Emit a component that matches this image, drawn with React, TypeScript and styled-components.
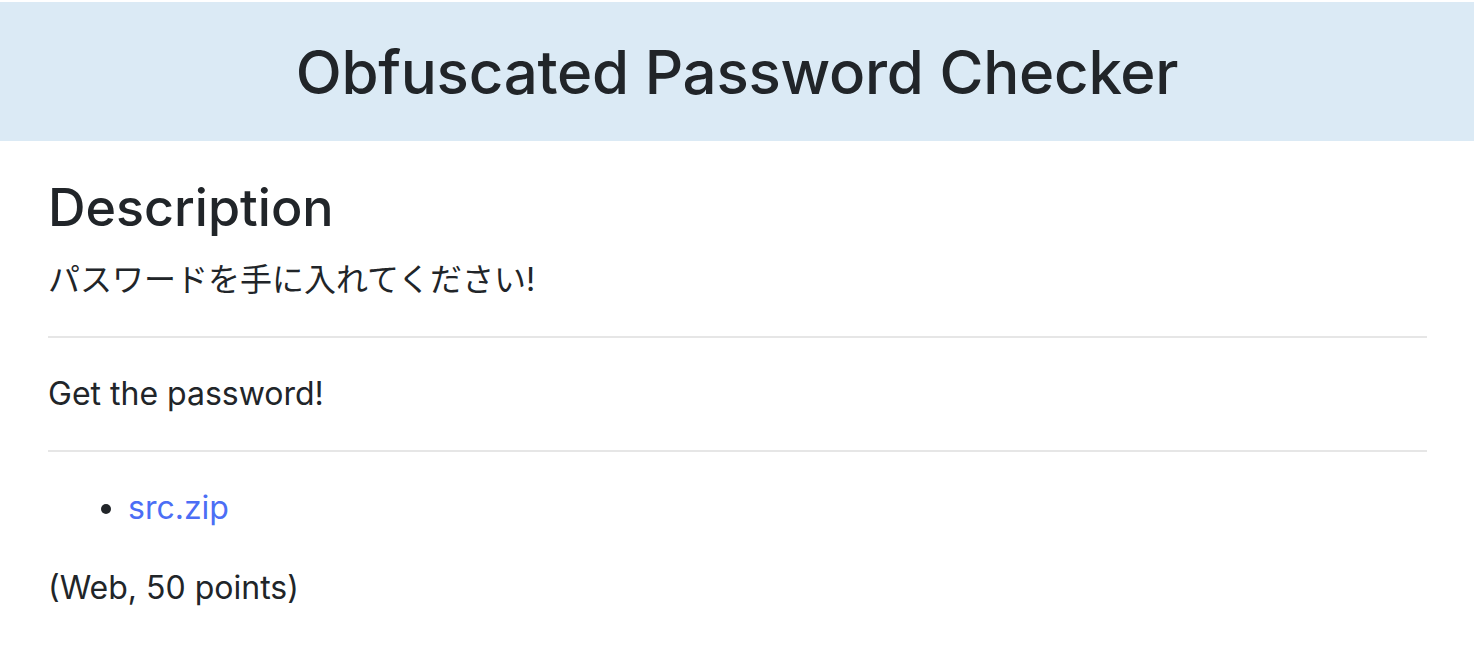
import React from "react";
import styled, { createGlobalStyle } from "styled-components";

const Global = createGlobalStyle`
  html, body { margin: 0; padding: 0; background: #fff; }
  body {
    font-family: Inter, "Noto Sans CJK JP", sans-serif;
    font-size: 32px;
    line-height: 1.5;
    color: #212529;
  }
  * { box-sizing: border-box; }
`;

const Header = styled.header`
  margin-top: 2px;
  height: 139px;
  background: #dbeaf5;
  display: flex;
  align-items: center;
  justify-content: center;
`;

const Title = styled.h1`
  margin: 0;
  font-size: 60px;
  font-weight: 500;
  line-height: 1.2;
  letter-spacing: -0.25px;
`;

const Main = styled.main`
  padding: 35px 47px 0 48px;
`;

const Heading = styled.h2`
  margin: 0 0 16px;
  font-size: 52px;
  font-weight: 500;
  line-height: 1.24;
`;

const Para = styled.p`
  margin: 0 0 32px;
  font-family: Inter, "Noto Sans CJK JP", sans-serif;
`;

const Rule = styled.hr`
  margin: 32px 0;
  border: 0;
  border-top: 2px solid #e6e6e6;
`;

const List = styled.ul`
  margin: 0 0 32px;
  padding-left: 80px;
`;

const Link = styled.a`
  color: #4c6ef5;
  text-decoration: none;
`;

export default function App() {
  return (
    <>
      <Global />
      <Header>
        <Title>Obfuscated Password Checker</Title>
      </Header>
      <Main>
        <Heading>Description</Heading>
        <Para>パスワードを手に入れてください!</Para>
        <Rule />
        <Para>Get the password!</Para>
        <Rule />
        <List>
          <li>
            <Link href="#">src.zip</Link>
          </li>
        </List>
        <Para>(Web, 50 points)</Para>
      </Main>
    </>
  );
}
